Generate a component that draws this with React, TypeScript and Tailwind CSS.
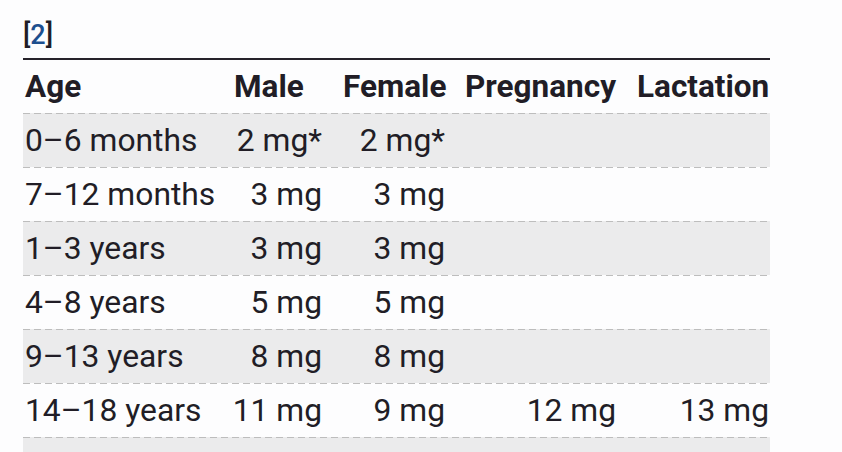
import React from "react";

const rows = [
  { age: "0–6 months", male: "2 mg*", female: "2 mg*", preg: "", lact: "" },
  { age: "7–12 months", male: "3 mg", female: "3 mg", preg: "", lact: "" },
  { age: "1–3 years", male: "3 mg", female: "3 mg", preg: "", lact: "" },
  { age: "4–8 years", male: "5 mg", female: "5 mg", preg: "", lact: "" },
  { age: "9–13 years", male: "8 mg", female: "8 mg", preg: "", lact: "" },
  { age: "14–18 years", male: "11 mg", female: "9 mg", preg: "12 mg", lact: "13 mg" },
];

const cols = "grid grid-cols-[201px_109px_122px_172px_143px]";

// dashed separator, longer dashes than border-dashed gives
const Dash = () => (
  <div className="h-px bg-[repeating-linear-gradient(90deg,#bdbdbd_0_7px,transparent_7px_11px)]" />
);

export default function App() {
  return (
    <div
      className="h-[452px] w-[842px] overflow-hidden bg-[#fdfdfe] pl-[23px] pt-[20px] text-[#211d26]"
      style={{ fontFamily: "Roboto, 'Liberation Sans', sans-serif" }}
    >
      <div className="h-[30px] text-[27px] font-medium leading-[30px]">
        [<span className="text-[#1d4f8e]">2</span>]
      </div>
      <div className="mt-[8px] w-[747px] border-t-2 border-[#26222a]">
        <div className={`${cols} h-[53px] text-[31.5px] font-bold leading-[53px]`}>
          <div className="pl-[2px]">Age</div>
          <div className="pl-[10px]">Male</div>
          <div className="pl-[10px]">Female</div>
          <div className="pl-[10px]">Pregnancy</div>
          <div className="pl-[10px]">Lactation</div>
        </div>
        {rows.map((r, i) => (
          <div key={i} className={i % 2 === 0 ? "bg-[#ebebec]" : "bg-[#fdfdfe]"}>
            <Dash />
            <div className={`${cols} h-[53px] text-[31.8px] leading-[53px]`}>
              <div className="whitespace-nowrap pl-[2px]">{r.age}</div>
              <div className="pr-[11px] text-right">{r.male}</div>
              <div className="pr-[10px] text-right">{r.female}</div>
              <div className="pr-[11px] text-right">{r.preg}</div>
              <div className="pr-[1px] text-right">{r.lact}</div>
            </div>
          </div>
        ))}
        <div className="h-[54px] bg-[#ebebec]">
          <Dash />
        </div>
      </div>
    </div>
  );
}
